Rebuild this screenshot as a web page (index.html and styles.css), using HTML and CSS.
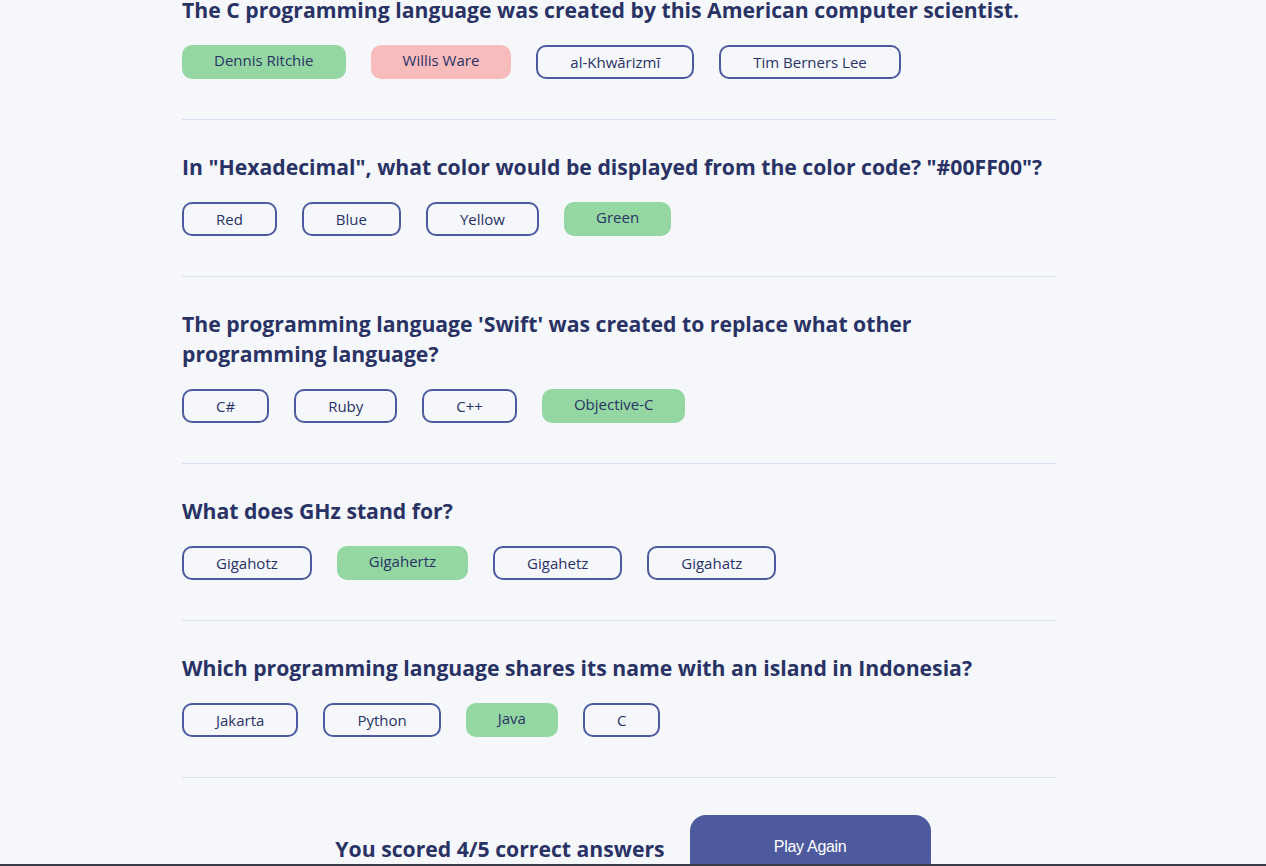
FILE: index.html
```html
<!DOCTYPE html>
<html lang="en">
<head>
<meta charset="utf-8">
<title>Quizzical</title>
<link rel="stylesheet" href="styles.css">
</head>
<body>
<main class="quiz">
  <section class="question first">
    <h2 class="question-title">The C programming language was created by this American computer scientist.</h2>
    <div class="answers">
      <span class="answer correct">Dennis Ritchie</span>
      <span class="answer wrong">Willis Ware</span>
      <span class="answer">al-Khwārizmī</span>
      <span class="answer">Tim Berners Lee</span>
    </div>
  </section>
  <section class="question">
    <h2 class="question-title">In "Hexadecimal", what color would be displayed from the color code? "#00FF00"?</h2>
    <div class="answers">
      <span class="answer">Red</span>
      <span class="answer">Blue</span>
      <span class="answer">Yellow</span>
      <span class="answer correct">Green</span>
    </div>
  </section>
  <section class="question">
    <h2 class="question-title">The programming language 'Swift' was created to replace what other programming language?</h2>
    <div class="answers">
      <span class="answer">C#</span>
      <span class="answer">Ruby</span>
      <span class="answer">C++</span>
      <span class="answer correct">Objective-C</span>
    </div>
  </section>
  <section class="question">
    <h2 class="question-title">What does GHz stand for?</h2>
    <div class="answers">
      <span class="answer">Gigahotz</span>
      <span class="answer correct">Gigahertz</span>
      <span class="answer">Gigahetz</span>
      <span class="answer">Gigahatz</span>
    </div>
  </section>
  <section class="question">
    <h2 class="question-title">Which programming language shares its name with an island in Indonesia?</h2>
    <div class="answers">
      <span class="answer">Jakarta</span>
      <span class="answer">Python</span>
      <span class="answer correct">Java</span>
      <span class="answer">C</span>
    </div>
  </section>
</main>
<footer class="score-row">
  <p class="score">You scored 4/5 correct answers</p>
  <button class="play-again">Play Again</button>
</footer>
<div class="bottom-edge"></div>
</body>
</html>
```

FILE: styles.css
```css
html, body {
  margin: 0;
  padding: 0;
  background: #F5F7FB;
}

body {
  font-family: "Open Sans", "Noto Sans", sans-serif;
  color: #293264;
}

.quiz {
  width: 875px;
  margin: 0 0 0 182px;
}

.question {
  padding: 32px 0 40px;
  border-bottom: 1px solid #DBDEF0;
}

.question.first {
  padding-top: 0;
}

.question-title {
  margin: 0 0 20px;
  font-size: 21.2px;
  line-height: 30px;
  font-weight: 700;
  color: #293264;
}

.question.first .question-title {
  line-height: 20px;
  margin-bottom: 25px;
}

.answers {
  display: flex;
  gap: 25px;
}

.answer {
  display: inline-block;
  box-sizing: border-box;
  height: 34px;
  padding: 6px 32px;
  border: 2px solid #4D5B9E;
  border-radius: 10px;
  font-size: 15px;
  line-height: 18px;
  color: #293264;
}

.answer.correct,
.answer.wrong {
  border: none;
  padding: 6px 32px 10px;
}

.answer.correct {
  background: #94D7A2;
}

.answer.wrong {
  background: #F8BCBC;
}

.score-row {
  display: flex;
  justify-content: center;
  align-items: center;
  gap: 25px;
  margin-top: 37px;
}

.score {
  margin: 3px 0 0;
  font-size: 21.2px;
  font-weight: 700;
  color: #293264;
}

.play-again {
  width: 241px;
  height: 64px;
  border: none;
  border-radius: 16px;
  background: #4D5B9E;
  color: #FFFFFF;
  font-family: "Liberation Sans", Arial, sans-serif;
  font-size: 16px;
  letter-spacing: -0.3px;
}

.bottom-edge {
  position: fixed;
  left: 0;
  right: 0;
  bottom: 0;
  height: 2px;
  background: #383C46;
}
```
